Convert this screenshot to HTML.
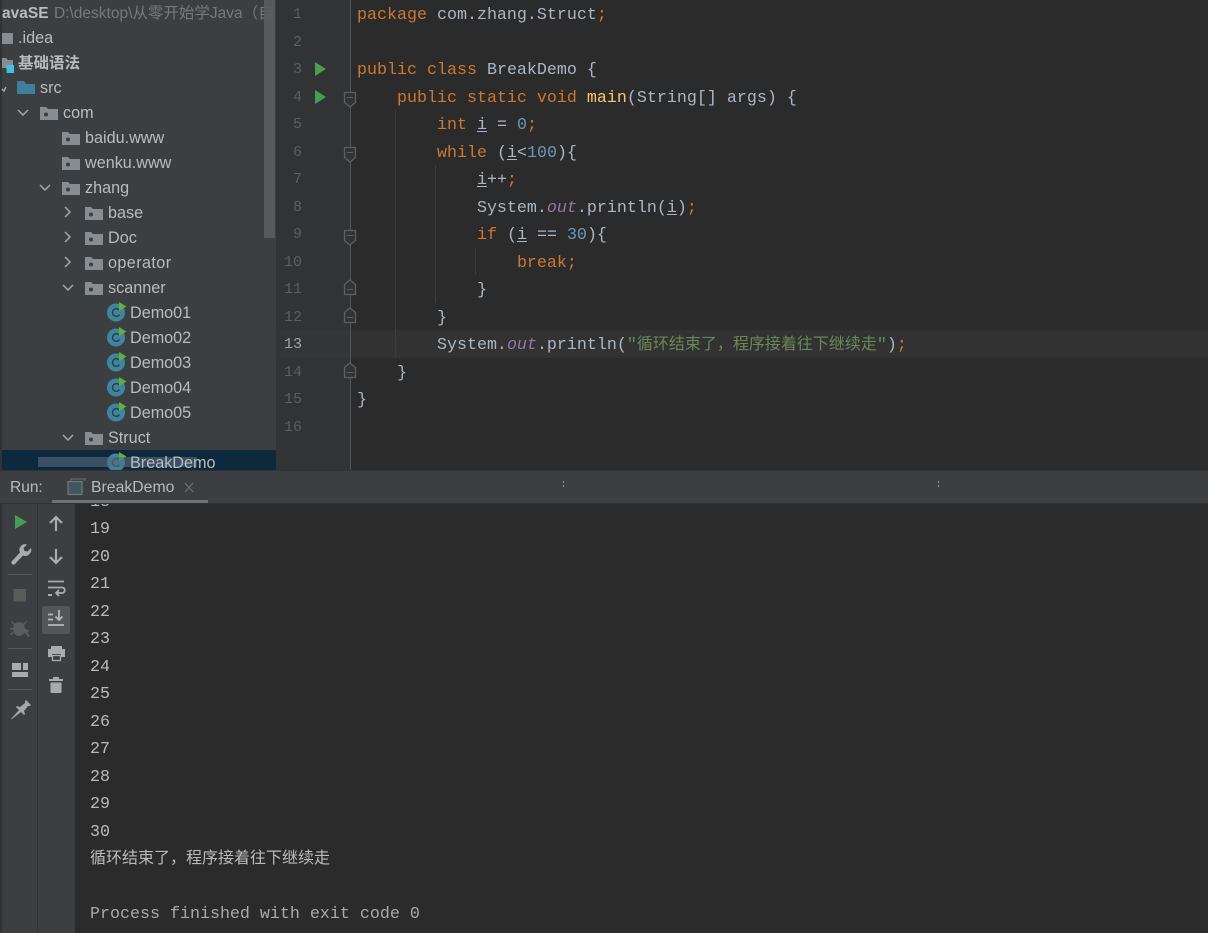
<!DOCTYPE html>
<html><head><meta charset="utf-8">
<style>
html,body{margin:0;padding:0;background:#2b2b2b}
#r{position:relative;width:1208px;height:933px;overflow:hidden;background:#2b2b2b}
.a{position:absolute}
.t{position:absolute;white-space:pre;font-family:"Liberation Sans","Noto Sans CJK SC",sans-serif;font-size:16.2px;line-height:25px;color:#bbbbbb;height:25px}
.c{position:absolute;white-space:pre;font-family:"Liberation Mono","WenQuanYi Zen Hei",monospace;font-size:16.67px;line-height:27px;height:27px;color:#a9b7c6;left:357px}
.k{color:#cc7832}.n{color:#6897bb}.f{color:#ffc66d}.o{color:#9876aa;font-style:italic}.s{color:#6a8759}
.u{text-decoration:underline;text-underline-offset:2px}
.cj{font-family:"WenQuanYi Zen Hei","Noto Sans CJK SC",sans-serif;font-size:16px;line-height:0}
.g{position:absolute;left:276px;width:26px;text-align:right;font-family:"Liberation Mono",monospace;font-size:15px;line-height:27px;color:#5b5f61;height:27px}
.o1{position:absolute;left:90px;white-space:pre;font-family:"Liberation Mono","WenQuanYi Zen Hei",monospace;font-size:16.67px;line-height:27px;height:27px;color:#bbbbbb}
svg{position:absolute;overflow:visible}
</style></head><body><div id="r">

<!-- project panel -->
<div class="a" style="left:0;top:0;width:276px;height:470px;background:#3c3f41"></div>
<div class="a" style="left:2px;top:450px;width:274px;height:20px;background:#0d293e"></div>
<div class="a" style="left:0;top:0;width:2px;height:470px;background:#313335"></div>

<div class="t" style="left:2px;top:1px;font-weight:bold;font-size:15.5px">avaSE</div>
<div class="t" style="left:54px;top:1px;color:#787878;width:222px;overflow:hidden;font-size:15.5px">D:\desktop\从零开始学Java（自</div>
<div class="a" style="left:264px;top:0;width:11px;height:238px;background:#5a5c5d;opacity:.9"></div>
<div class="t" style="left:18px;top:26px">.idea</div>
<div class="t" style="left:18px;top:51px;font-weight:bold;font-size:15.5px">基础语法</div>
<div class="t" style="left:40px;top:76px">src</div>
<div class="t" style="left:63px;top:101px">com</div>
<div class="t" style="left:85px;top:126px">baidu.www</div>
<div class="t" style="left:85px;top:151px">wenku.www</div>
<div class="t" style="left:85px;top:176px">zhang</div>
<div class="t" style="left:108px;top:201px">base</div>
<div class="t" style="left:108px;top:226px">Doc</div>
<div class="t" style="left:108px;top:251px;letter-spacing:.4px">operator</div>
<div class="t" style="left:108px;top:276px">scanner</div>
<div class="t" style="left:130px;top:301px">Demo01</div>
<div class="t" style="left:130px;top:326px">Demo02</div>
<div class="t" style="left:130px;top:351px">Demo03</div>
<div class="t" style="left:130px;top:376px">Demo04</div>
<div class="t" style="left:130px;top:401px">Demo05</div>
<div class="t" style="left:108px;top:426px">Struct</div>

<svg width="276" height="470" style="left:0;top:0">
<defs>
<g id="pk"><path d="M0 0h6l2 2h10v11H0z" fill="#868e94"/><circle cx="6" cy="7.500" r="2" fill="#3c3f41"/></g>
<g id="cl"><circle cx="9" cy="8.500" r="9" fill="#3e86a0"/><path d="M12.500 6.500A3.800 3.800 0 1 0 12.500 10.500" fill="none" stroke="#2c3d45" stroke-width="1.400"/><path d="M12 -2L19.500 2.500L12 7z" fill="#5fb13c"/></g>
</defs>
<rect x="2" y="33" width="11" height="11" fill="#868e94"/>
<path d="M2 58h4l2 2h5v8H2z" fill="#868e94"/><rect x="6.500" y="65" width="7.500" height="8" fill="#3dbfe8"/>
<path d="M17 81h7l2 3h9v10H17z" fill="#3f7f9c"/>
<path d="M2 89l2 2 2-4" fill="none" stroke="#b0b4b6" stroke-width="1.300"/>
<use href="#pk" x="40" y="107"/><use href="#pk" x="62" y="132"/><use href="#pk" x="62" y="157"/><use href="#pk" x="62" y="182"/>
<use href="#pk" x="85" y="207"/><use href="#pk" x="85" y="232"/><use href="#pk" x="85" y="257"/><use href="#pk" x="85" y="282"/><use href="#pk" x="85" y="432"/>
<g fill="none" stroke="#a4a8aa" stroke-width="1.500">
<path d="M18 110l5 5 5-5M40 185l5 5 5-5M63 285l5 5 5-5M63 435l5 5 5-5"/>
<path d="M65 207l5 5-5 5M65 232l5 5-5 5M65 257l5 5-5 5"/>
</g>
<use href="#cl" x="107" y="304"/><use href="#cl" x="107" y="329"/><use href="#cl" x="107" y="354"/><use href="#cl" x="107" y="379"/><use href="#cl" x="107" y="404"/><use href="#cl" x="107" y="454"/>
</svg>
<div class="a" style="left:38px;top:457px;width:159px;height:10px;background:#5a6b78;opacity:.6"></div>
<div class="t" style="left:130px;top:451px;height:19px;overflow:hidden">BreakDemo</div>

<!-- gutter -->
<div class="a" style="left:276px;top:0;width:74px;height:470px;background:#313335"></div>
<div class="a" style="left:350px;top:0;width:1px;height:470px;background:#555555"></div>
<div class="a" style="left:276px;top:330px;width:74px;height:28px;background:#333638"></div>
<div class="a" style="left:351px;top:330px;width:857px;height:28px;background:#323232"></div>

<div class="g" style="top:1px">1</div><div class="g" style="top:29px">2</div><div class="g" style="top:56px">3</div><div class="g" style="top:84px">4</div><div class="g" style="top:111px">5</div><div class="g" style="top:139px">6</div><div class="g" style="top:166px">7</div><div class="g" style="top:194px">8</div><div class="g" style="top:221px">9</div><div class="g" style="top:249px">10</div><div class="g" style="top:276px">11</div><div class="g" style="top:304px">12</div><div class="g" style="top:331px;color:#a4a3a3">13</div><div class="g" style="top:359px">14</div><div class="g" style="top:386px">15</div><div class="g" style="top:414px">16</div>

<svg width="1208" height="470" style="left:0;top:0">
<path d="M315 62l11 7-11 7zM315 90l11 7-11 7z" fill="#499c54"/>
<g fill="#313335" stroke="#5c5f61" stroke-width="1.300">
<path d="M344.500 92.500h11v10l-5.500 4.500-5.500-4.500z"/><path d="M344.500 147.500h11v10l-5.500 4.500-5.500-4.500z"/><path d="M344.500 230.500h11v10l-5.500 4.500-5.500-4.500z"/>
<path d="M344.500 294.500h11v-10l-5.500-4.500-5.500 4.500z"/><path d="M344.500 322.500h11v-10l-5.500-4.500-5.500 4.500z"/><path d="M344.500 377.500h11v-10l-5.500-4.500-5.500 4.500z"/>
</g>
<path d="M347 97.500h6M347 152.500h6M347 235.500h6M347 289.500h6M347 317.500h6M347 372.500h6" stroke="#5c5f61" stroke-width="1"/>
<g stroke="#3c3c3c" stroke-width="1">
<path d="M395.500 110V358M435.500 165V303M475.500 248V275"/>
</g>
</svg>

<!-- code -->
<div class="c" style="top:2px"><span class="k">package</span> com.zhang.Struct<span class="k">;</span></div>
<div class="c" style="top:57px"><span class="k">public class</span> BreakDemo {</div>
<div class="c" style="top:85px">    <span class="k">public static void</span> <span class="f">main</span>(String[] args) {</div>
<div class="c" style="top:112px">        <span class="k">int</span> <span class="u">i</span> = <span class="n">0</span><span class="k">;</span></div>
<div class="c" style="top:140px">        <span class="k">while</span> (<span class="u">i</span>&lt;<span class="n">100</span>){</div>
<div class="c" style="top:167px">            <span class="u">i</span>++<span class="k">;</span></div>
<div class="c" style="top:195px">            System.<span class="o">out</span>.println(<span class="u">i</span>)<span class="k">;</span></div>
<div class="c" style="top:222px">            <span class="k">if</span> (<span class="u">i</span> == <span class="n">30</span>){</div>
<div class="c" style="top:250px">                <span class="k">break;</span></div>
<div class="c" style="top:277px">            }</div>
<div class="c" style="top:305px">        }</div>
<div class="c" style="top:332px">        System.<span class="o">out</span>.println(<span class="s">"<span class="cj">循环结束了，程序接着往下继续走</span>"</span>)<span class="k">;</span></div>
<div class="c" style="top:360px">    }</div>
<div class="c" style="top:387px">}</div>

<!-- run header -->
<div class="a" style="left:0;top:470px;width:1208px;background:#3c3f41;border-top:1px solid #323232;border-bottom:1px solid #323232;box-sizing:border-box;height:34px"></div>
<div class="t" style="left:10px;top:475px;font-size:15.5px">Run:</div>
<div class="t" style="left:91px;top:475px;font-size:15.8px">BreakDemo</div>
<div class="a" style="left:52px;top:500px;width:156px;height:3px;background:#6e7275"></div>
<svg width="1208" height="40" style="left:0;top:470px">
<path d="M71 12v-3h14v2" fill="none" stroke="#6e7274" stroke-width="1"/>
<rect x="68" y="11.500" width="14" height="13" fill="#3f5663" stroke="#73787b" stroke-width="1.200"/>
<path d="M185 13l8 9M193 13l-8 9" stroke="#6d7173" stroke-width="1.100"/>
<path d="M563.500 11v8M938.500 11v8" stroke="#8a9aa5" stroke-width="1" stroke-dasharray="2 2"/>
</svg>

<!-- run toolbars -->
<div class="a" style="left:0;top:504px;width:75px;height:429px;background:#3c3f41"></div>
<div class="a" style="left:0;top:504px;width:2px;height:429px;background:#313335"></div>
<div class="a" style="left:37px;top:504px;width:1px;height:429px;background:#323232"></div>
<div class="a" style="left:42px;top:606px;width:28px;height:28px;background:#53575a;border-radius:3px"></div>
<svg width="76" height="240" style="left:0;top:500px">
<path d="M15 15l12 7-12 7z" fill="#499c54"/>
<path d="M12 61l8-8.500a5.800 5.800 0 0 1 1-6.500a5.800 5.800 0 0 1 6-1.500l-3.500 3.500 1 3 3 .5 3.500-3.500a5.800 5.800 0 0 1-1.500 6a5.800 5.800 0 0 1-6.500 1.500l-8 8.500a1.500 1.500 0 0 1-3-3z" fill="#a9acae"/>
<path d="M8 74.500h24M8 148.500h24M8 189.500h24" stroke="#54585a" stroke-width="1"/>
<rect x="13.500" y="89" width="12.500" height="12.500" fill="#5a5a5a"/>
<g fill="#5a5c5d"><ellipse cx="19" cy="129" rx="6" ry="7"/><path d="M12 121l3 3-1 1-3-3zM26 121l-3 3 1 1 3-3zM10 128h4v1.500h-4zM10 134l3-2 1 1-3 2z"/></g>
<path d="M22 127l8 4-3 1 3 4-2 1-3-4-3 2z" fill="#5a5c5d"/>
<path d="M12 163h9v7h-9zM23 163h5v7h-5zM12 172h16v5H12z" fill="#a9acae"/>
<path d="M11 219l8-9-3-3 1-1 3 1 5-4 0-2 1-1 5 5-1 1-2 0-4 5 1 3-1 1-3-3-9 7z" fill="#a4a7a9"/>
<g fill="none" stroke="#a9acae" stroke-width="2.200">
<path d="M56 31V17M50 23l6-6 6 6"/>
<path d="M56 49v14M50 57l6 6 6-6"/>
</g>
<g fill="none" stroke="#a9acae" stroke-width="1.800">
<path d="M48 81.500h16M48 87.500h14a2.500 2.500 0 0 1 0 5.500h-5M59 90l-3 3 3 3"/>
</g>
<rect x="48" y="94" width="4" height="2" fill="#a9acae"/>
<g fill="none" stroke="#b4b7b9" stroke-width="1.800">
<path d="M48 114.500h5M48 119.500h5M48 125h16M59 110v10M55.500 116.500l3.500 3.500 3.500-3.500"/>
</g>
<path d="M51 146h11v3h3v8h-4v-3H52v3h-4v-8h3z" fill="#a9acae"/>
<rect x="52.500" y="155.500" width="8" height="5" fill="#3c3f41" stroke="#a9acae" stroke-width="1.300"/>
<path d="M49 179h14v2H49zM53 177h6v2h-6zM50.500 182.500h11V192a1 1 0 0 1-1 1h-9a1 1 0 0 1-1-1z" fill="#a9acae"/>
</svg>

<!-- console -->
<div class="a" style="left:76px;top:504px;width:200px;height:8px;overflow:hidden"><div class="o1" style="left:14px;top:-15px">18</div></div>
<div class="o1" style="top:516px">19</div>
<div class="o1" style="top:544px">20</div>
<div class="o1" style="top:571px">21</div>
<div class="o1" style="top:599px">22</div>
<div class="o1" style="top:626px">23</div>
<div class="o1" style="top:654px">24</div>
<div class="o1" style="top:681px">25</div>
<div class="o1" style="top:709px">26</div>
<div class="o1" style="top:736px">27</div>
<div class="o1" style="top:764px">28</div>
<div class="o1" style="top:791px">29</div>
<div class="o1" style="top:819px">30</div>
<div class="o1" style="top:846px"><span class="cj">循环结束了，程序接着往下继续走</span></div>
<div class="o1" style="top:901px;color:#a9a9a9">Process finished with exit code 0</div>

</div></body></html>
